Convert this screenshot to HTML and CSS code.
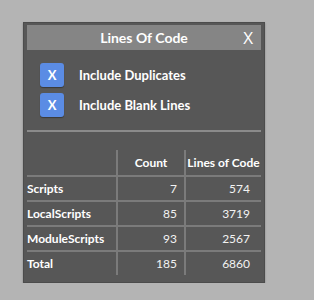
FILE: index.html
```html
<!DOCTYPE html>
<html lang="en">
  <head>
    <meta charset="UTF-8" />
    <title>Lines Of Code</title>
    <link rel="stylesheet" href="styles.css">
  </head>
  <body>
    <div class="panel">
      <div class="title-bar">
        <span></span>
        <span class="title">Lines Of Code</span>
        <span class="close">X</span>
      </div>

      <div class="options">
        <div class="option">
          <span class="check">X</span>
          <span class="option-label">Include Duplicates</span>
        </div>
        <div class="option">
          <span class="check">X</span>
          <span class="option-label">Include Blank Lines</span>
        </div>
      </div>

      <div class="divider"></div>

      <div class="stats">
        <div class="cell head"></div>
        <div class="cell head center">Count</div>
        <div class="cell head center">Lines of Code</div>

        <div class="cell name">Scripts</div>
        <div class="cell num">7</div>
        <div class="cell num wide">574</div>

        <div class="cell name">LocalScripts</div>
        <div class="cell num">85</div>
        <div class="cell num wide">3719</div>

        <div class="cell name">ModuleScripts</div>
        <div class="cell num">93</div>
        <div class="cell num wide">2567</div>

        <div class="cell name">Total</div>
        <div class="cell num">185</div>
        <div class="cell num wide">6860</div>
      </div>
    </div>
  </body>
</html>
```

FILE: styles.css
```css
body {
  margin: 0;
  background: #b4b4b4;
  font-family: "Lato", "Open Sans", sans-serif;
}

.panel {
  width: 242px;
  height: 261px;
  box-sizing: border-box;
  margin: 22px 0 0 23px;
  padding: 2px 3px 0 3px;
  background: #575757;
  border: 1px solid #4c4c4c;
  box-shadow: 0 1px 2px rgba(0, 0, 0, 0.25);
}

.title-bar {
  display: grid;
  grid-template-columns: 1fr auto 1fr;
  align-items: center;
  height: 25px;
  background: #858585;
  color: #fff;
}

.title {
  font-size: 14px;
  font-weight: bold;
}

.close {
  justify-self: end;
  margin-right: 8px;
  font-family: "Open Sans", sans-serif;
  font-size: 17px;
  font-weight: 400;
}

.options {
  display: flex;
  flex-direction: column;
  gap: 6px;
  padding: 13px 0 0 13px;
}

.option {
  display: flex;
  align-items: center;
  gap: 15px;
}

.check {
  width: 24px;
  height: 24px;
  display: flex;
  justify-content: center;
  align-items: center;
  background: #5b8ce4;
  border-radius: 3px;
  box-shadow: 0 1px 1px rgba(0, 0, 0, 0.35);
  color: #fff;
  font-size: 13px;
  font-weight: bold;
}

.option-label {
  color: #fff;
  font-size: 13px;
  font-weight: bold;
}

.divider {
  height: 2px;
  margin-top: 13px;
  background: #8b8b8b;
}

.stats {
  display: grid;
  grid-template-columns: 89px 66px 75px;
  grid-template-rows: 25px repeat(4, 23px);
  gap: 2px;
  margin-top: 18px;
  background: #7b7b7b;
}

.cell {
  display: flex;
  align-items: center;
  background: #575757;
  color: #f2f2f2;
  font-size: 12px;
}

.head {
  font-weight: bold;
  color: #fff;
}

.center {
  justify-content: center;
}

.name {
  font-weight: bold;
  color: #fff;
}

.num {
  justify-content: flex-end;
  padding-right: 7px;
}

.num.wide {
  padding-right: 11px;
}
```
